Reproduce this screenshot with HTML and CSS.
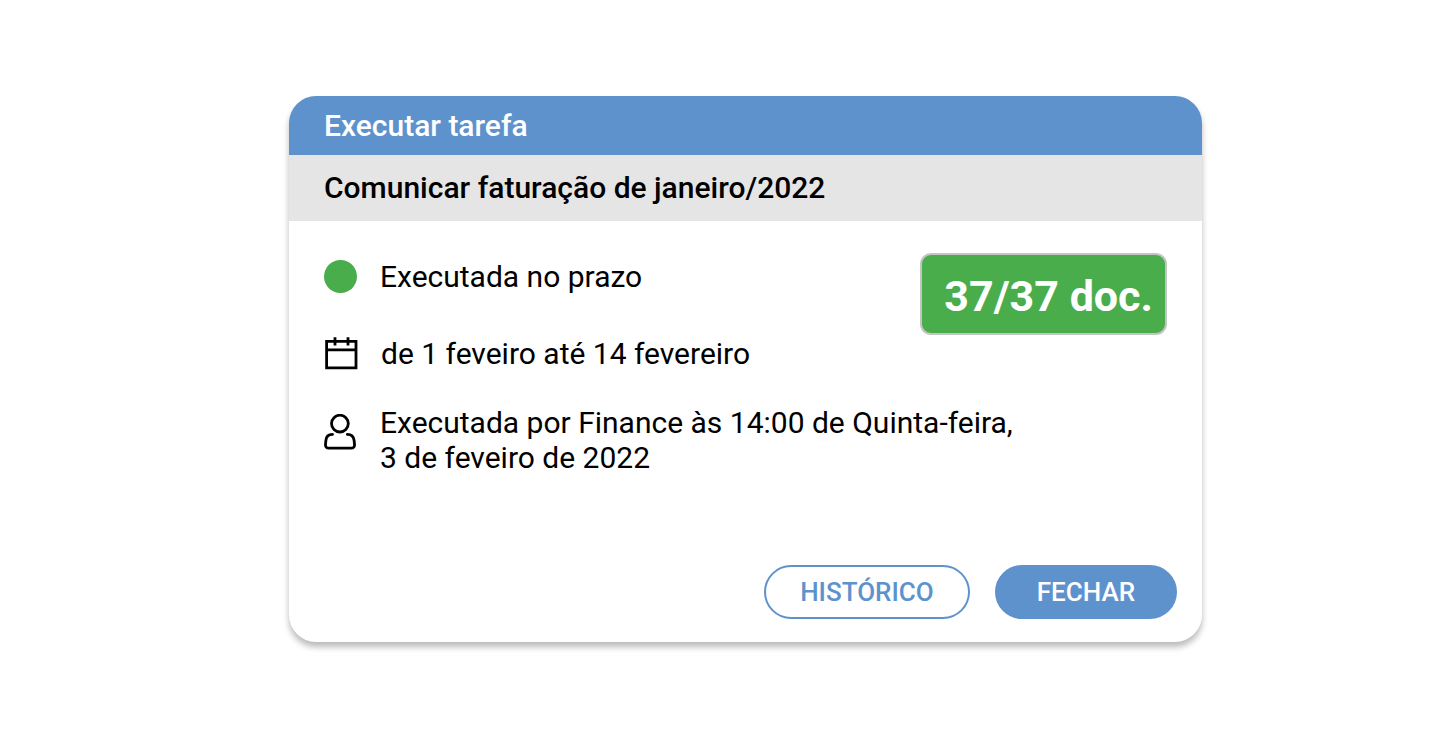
FILE: index.html
```html
<!DOCTYPE html>
<html lang="pt">
<head>
  <meta charset="UTF-8">
  <meta name="viewport" content="width=device-width, initial-scale=1">
  <title>Executar tarefa</title>
  <link rel="stylesheet" href="styles.css">
</head>
<body>
  <main class="card">
    <h1 class="card-header">Executar tarefa</h1>
    <h2 class="card-subheader">Comunicar faturação de janeiro/2022</h2>

    <div class="card-body">
      <div class="badge">37/37 doc.</div>
      <ul class="details">
        <li class="detail">
          <span class="status-dot"></span>
          <span>Executada no prazo</span>
        </li>
        <li class="detail detail-date">
          <!-- Calendário -->
          <svg class="icon" viewBox="0 0 34 36" fill="none" stroke="#000" stroke-width="2.8" aria-hidden="true">
            <path d="M2.6 6.4H32V32.8H2.6ZM2.6 14.8H32M11 2.2V10.6M24 2.2V10.6" />
          </svg>
          <span>de 1 feveiro até 14 fevereiro</span>
        </li>
        <li class="detail detail-user">
          <!-- Utilizador -->
          <svg class="icon" viewBox="0 0 34 36" fill="none" stroke="#000" stroke-width="2.8" stroke-linecap="round" aria-hidden="true">
            <circle cx="15.9" cy="9.6" r="8.4" />
            <path d="M8.5 20.4C4.2 20.4 2.2 22.4 1.9 26.4L1.5 30.2C1.3 32.8 2.4 34.2 4.8 34.2H27.1C29.5 34.2 30.8 32.8 30.5 30.2L30.1 26.4C29.6 22.4 27.6 20.4 23.4 20.4" />
          </svg>
          <span>Executada por Finance às 14:00 de Quinta-feira,<br>3 de feveiro de 2022</span>
        </li>
      </ul>
    </div>

    <div class="card-actions">
      <button type="button" class="btn btn-outline">HISTÓRICO</button>
      <button type="button" class="btn btn-primary">FECHAR</button>
    </div>
  </main>
</body>
</html>
```
FILE: styles.css
```css
* {
  margin: 0;
  padding: 0;
  box-sizing: border-box;
}

body {
  background: #fff;
  color: #000;
  font-family: Roboto, Arial, sans-serif;
  font-size: 30px;
  line-height: 35px;
  padding: 96px 235px 96px 289px;
}

.card {
  background: #fff;
  border-radius: 27px;
  overflow: hidden;
  box-shadow: 0 5px 6px rgba(0, 0, 0, 0.27);
}

.card-header,
.card-subheader {
  padding: 12px 35px;
  font-size: 30px;
  font-weight: 500;
}

.card-header {
  background: #5e92cd;
  color: #fff;
}

.card-subheader {
  background: #e5e5e5;
  padding: 15px 35px 16px;
}

.card-body {
  padding: 32px 35px 0;
}

/* Lista de detalhes */
.details {
  list-style: none;
  padding-top: 6px;
}

.detail {
  display: flex;
  align-items: center;
  gap: 23px;
}

.detail-date {
  margin-top: 41px;
}

.detail-user {
  margin-top: 34px;
  align-items: flex-start;
  gap: 22px;
}

.detail-user .icon {
  margin-top: 9px;
}

.status-dot {
  width: 33px;
  height: 33px;
  border-radius: 50%;
  background: #4aad4c;
}

.icon {
  width: 34px;
  height: 36px;
  flex-shrink: 0;
}

/* Contador de documentos, à direita das primeiras linhas */
.badge {
  float: right;
  background: #4aad4c;
  border: 2px solid #c4c4c4;
  border-radius: 11px;
  color: #fff;
  font-size: 43px;
  font-weight: 700;
  line-height: 50px;
  padding: 16px 12px 12px 22px;
  white-space: nowrap;
}

/* Botões */
.card-actions {
  display: flex;
  justify-content: flex-end;
  gap: 25px;
  padding: 90px 25px 23px;
}

.btn {
  border: 2px solid #5e92cd;
  border-radius: 27px;
  font-family: inherit;
  font-size: 26px;
  font-weight: 500;
  line-height: 30px;
  cursor: pointer;
}

.btn-outline {
  background: #fff;
  color: #5e92cd;
  padding: 10px 34px;
}

.btn-primary {
  background: #5e92cd;
  color: #fff;
  padding: 10px 40px;
}
```
